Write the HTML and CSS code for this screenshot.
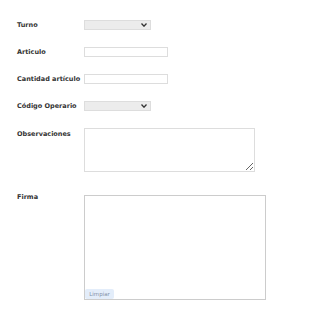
FILE: index.html
```html
<!DOCTYPE html>
<html lang="es">
  <head>
    <meta charset="UTF-8" />
    <meta name="viewport" content="width=device-width, initial-scale=1.0" />
    <title>Registro</title>
    <link rel="stylesheet" href="styles.css">
  </head>
  <body>
    <form id="mainForm">
      <div class="row">
        <label for="turno">Turno</label>
        <select id="turno" class="sel"></select>
      </div>
      <div class="row">
        <label for="articulo">Articulo</label>
        <input type="text" id="articulo" class="txt" />
      </div>
      <div class="row">
        <label for="cantidad">Cantidad artículo</label>
        <input type="text" id="cantidad" class="txt" />
      </div>
      <div class="row">
        <label for="operario">Código Operario</label>
        <select id="operario" class="sel"></select>
      </div>
      <div class="row row-top">
        <label for="obs">Observaciones</label>
        <textarea id="obs"></textarea>
      </div>
      <div class="row row-top row-firma">
        <label>Firma</label>
        <div class="firma">
          <button type="button" class="btn-clear">Limpiar</button>
        </div>
      </div>
    </form>
  </body>
</html>
```

FILE: styles.css
```css
* {
  box-sizing: border-box;
}

body {
  margin: 0;
  padding: 20px 0 0 17px;
  font-family: "DejaVu Sans", Verdana, sans-serif;
  color: #333;
  background: #fff;
}

#mainForm .row {
  display: flex;
  align-items: center;
  margin-bottom: 17px;
}

#mainForm .row-top {
  align-items: flex-start;
}

/* margins collapse with the row above, so this is the full gap */
#mainForm .row-firma {
  margin-top: 23px;
}

#mainForm label {
  width: 67px;
  flex: none;
  font-size: 6.5px;
  font-weight: bold;
  line-height: 10px;
  white-space: nowrap;
}

.row-top label {
  padding-top: 1px;
}

#mainForm .row-firma label {
  padding-top: 0;
  margin-top: -3px;
}

#mainForm .sel {
  appearance: none;
  width: 67px;
  height: 10px;
  margin: 0;
  padding: 0;
  border: 1px solid #ddd;
  border-radius: 0;
  background: #ececec url("data:image/svg+xml,%3Csvg xmlns='http://www.w3.org/2000/svg' width='6' height='4' viewBox='0 0 6 4'%3E%3Cpath d='M0.5 0.5 L3 3.2 L5.5 0.5' fill='none' stroke='%23333' stroke-width='1.3'/%3E%3C/svg%3E") no-repeat right 3px center;
}

#mainForm .txt {
  width: 84px;
  height: 10px;
  margin: 0;
  padding: 0;
  border: 1px solid #ddd;
}

#mainForm textarea {
  width: 171px;
  height: 44px;
  margin: 0;
  padding: 0;
  border: 1px solid #ddd;
  resize: vertical;
}

.firma {
  position: relative;
  width: 182px;
  height: 105px;
  border: 1px solid #ccc;
  background: #fff;
}

.btn-clear {
  position: absolute;
  left: 0;
  bottom: 0;
  width: 29px;
  height: 10px;
  padding: 0;
  border: none;
  border-radius: 2px;
  background: #e3edfa;
  color: #8392a8;
  font-family: "DejaVu Sans", Verdana, sans-serif;
  font-size: 5.5px;
  cursor: pointer;
}
```
